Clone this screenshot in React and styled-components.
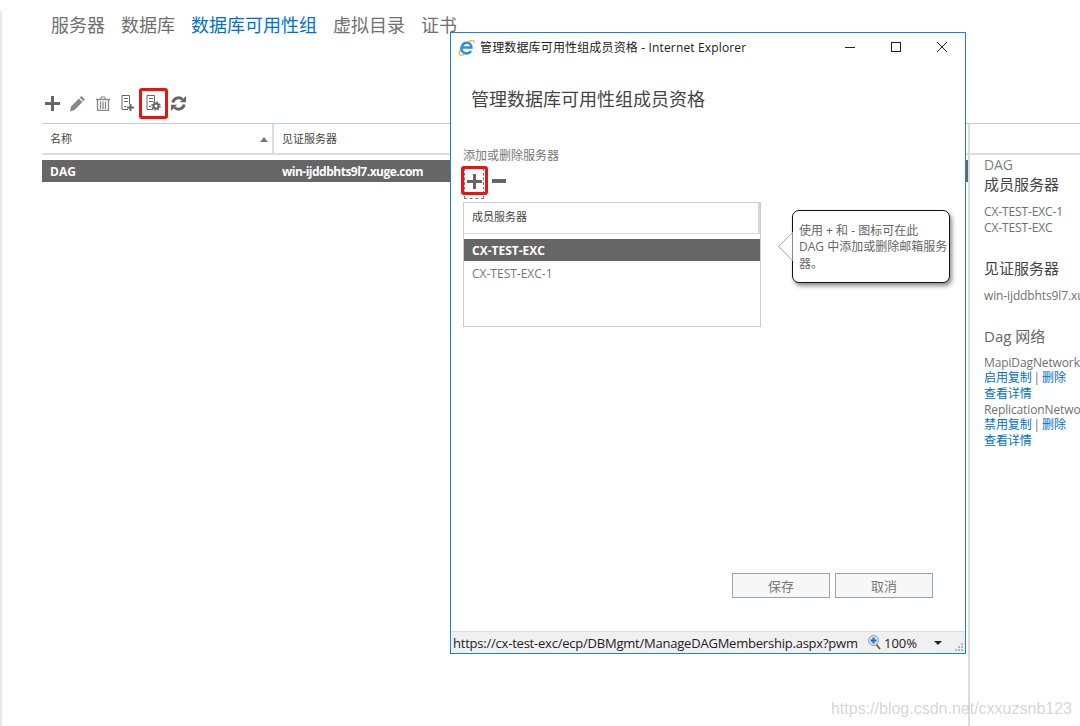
import React from 'react';
import styled, { createGlobalStyle } from 'styled-components';

const grey = '#707070';
const blue = '#0072c6';
const line = '#c8cfd4';

const GlobalStyle = createGlobalStyle`
  html, body {
    margin: 0;
    padding: 0;
    background: #fff;
  }
  body {
    font-family: "Open Sans", "Noto Sans CJK SC", sans-serif;
    font-size: 12px;
    color: ${grey};
  }
  *, *::before, *::after {
    box-sizing: border-box;
  }
`;

const Page = styled.div`
  position: relative;
  display: flex;
  width: 1080px;
  height: 726px;
  overflow: hidden;
`;

const Rail = styled.div`
  width: 2px;
  margin-top: 11px;
  background: #e9e9e9;
`;

const Main = styled.div`
  flex: 1;
  display: flex;
  flex-direction: column;
  min-width: 0;
`;

const Nav = styled.nav`
  display: flex;
  gap: 16px;
  height: 36px;
  padding: 12px 0 0 49px;
  font-size: 18px;
  line-height: 26px;
  white-space: nowrap;
`;

const NavItem = styled.span`
  color: ${(p) => (p.$active ? blue : grey)};
`;

const Toolbar = styled.div`
  display: flex;
  align-items: center;
  height: 40px;
  margin-top: 47px;
  padding-left: 38px;
`;

const ToolButton = styled.span`
  position: relative;
  display: flex;
  align-items: center;
  justify-content: center;
  width: 25.2px;
  height: 20px;
  color: ${(p) => (p.$soft ? '#888' : '#666')};

  ${(p) => p.$marked && `
    &::after {
      content: '';
      position: absolute;
      left: -2px;
      top: -5px;
      width: 29px;
      height: 31px;
      border: 3px solid #f01010;
      border-radius: 3px;
    }
  `}
`;

const Split = styled.div`
  flex: 1;
  display: flex;
  margin-left: 40px;
  border-top: 1px solid ${line};
  min-height: 0;
`;

const ListPane = styled.div`
  width: 926px;
  flex: none;
`;

const HeaderRow = styled.div`
  display: flex;
  height: 31px;
  border-bottom: 2px solid #d9dde0;
  font-size: 11px;
  line-height: 30px;
  color: #444;
`;

const HeaderCell = styled.div`
  position: relative;
  width: ${(p) => p.$width};
  padding-left: 8px;
  border-right: ${(p) => (p.$divider ? '2px solid #d9dde0' : 'none')};
`;

const SortArrow = styled.i`
  position: absolute;
  right: 4px;
  top: 13px;
  border-left: 4px solid transparent;
  border-right: 4px solid transparent;
  border-bottom: 5px solid #777;
`;

const DataRow = styled.div`
  display: flex;
  height: 22px;
  margin-top: 5px;
  background: #666;
  color: #fff;
  font-weight: 700;
  line-height: 23px;
`;

const DataCell = styled.div`
  width: ${(p) => p.$width};
  padding-left: 8px;
  letter-spacing: ${(p) => (p.$tight ? '-0.5px' : '0')};
`;

const DetailPane = styled.aside`
  flex: 1;
  min-width: 0;
  overflow: hidden;
  border-left: 2px solid #dcdcdc;
  white-space: nowrap;
`;

const DetailHead = styled.div`
  height: 31px;
  border-bottom: 2px solid #d9dde0;
`;

const DetailBody = styled.div`
  padding: 1px 0 0 14px;
  line-height: 15.6px;
  letter-spacing: -0.12px;
  word-spacing: -1px;
`;

const DagName = styled.div`
  font-size: 14px;
  line-height: 18px;
  color: #808080;
`;

const DetailTitle = styled.div`
  font-size: 15px;
  line-height: 20px;
  letter-spacing: 0;
  word-spacing: 0;
  color: ${(p) => (p.$soft ? '#666' : '#444')};
  margin-top: ${(p) => p.$top || 0}px;
  margin-bottom: ${(p) => p.$bottom || 10}px;
`;

const LinkText = styled.a`
  color: ${blue};
`;

const Dialog = styled.section`
  position: absolute;
  left: 450px;
  top: 32px;
  width: 516px;
  height: 622px;
  display: flex;
  flex-direction: column;
  background: #fff;
  border: 1px solid #1883d7;
`;

const TitleBar = styled.header`
  display: flex;
  align-items: center;
  height: 29px;
  flex: none;
  padding: 0 0 1px 7px;
  color: #222;
  font-size: 12px;
  letter-spacing: 0.15px;
`;

const TitleText = styled.span`
  flex: 1;
  margin-left: 5px;
  white-space: nowrap;
`;

const WindowButton = styled.span`
  display: flex;
  width: 46px;
  justify-content: center;
  color: #222;
`;

const DialogBody = styled.div`
  position: relative;
  flex: 1;
  display: flex;
  flex-direction: column;
  padding: 0 32px 33px 12px;
`;

const Heading = styled.h1`
  margin: 23px 0 0 8px;
  font-size: 18px;
  font-weight: 400;
  line-height: 28px;
  color: #444;
`;

const FieldLabel = styled.div`
  margin-top: 34px;
  line-height: 18px;
  color: #777;
`;

const IconRow = styled.div`
  display: flex;
  align-items: flex-start;
  gap: 8px;
  height: 31px;
  margin: 3px 0 0 1px;
`;

const FocusBox = styled.span`
  position: relative;
  display: flex;
  justify-content: center;
  width: 20px;
  height: 31px;
  padding-top: 5px;
  border: 1px dashed #777;
  color: #666;

  &::after {
    content: '';
    position: absolute;
    left: -4px;
    top: -3px;
    width: 27px;
    height: 29px;
    border: 3px solid #f01010;
    border-radius: 3px;
  }
`;

const MinusButton = styled.span`
  display: flex;
  margin-top: 11px;
  color: #666;
`;

const MemberBox = styled.div`
  width: 298px;
  height: 125px;
  margin-top: 3px;
  border: 1px solid ${line};
`;

const MemberHead = styled.div`
  height: 31px;
  padding-left: 8px;
  border-right: 2px solid #d4d8db;
  border-bottom: 1px solid #d4d8db;
  font-size: 11px;
  line-height: 28px;
  color: #444;
`;

const MemberRow = styled.div`
  height: 22px;
  padding-left: 8px;
  line-height: 23px;
  background: ${(p) => (p.$selected ? '#666' : 'transparent')};
  color: ${(p) => (p.$selected ? '#fff' : '#777')};
  font-weight: ${(p) => (p.$selected ? 700 : 400)};
  margin-top: ${(p) => (p.$selected ? 5 : 1)}px;
`;

const Callout = styled.div`
  position: absolute;
  left: 341px;
  top: 148px;
  width: 158px;
  height: 73px;
  padding: 12px 0 0 6px;
  background: #fff;
  border: 1px solid #111;
  border-radius: 7px;
  box-shadow: 2px 3px 4px rgba(0, 0, 0, 0.45);
  line-height: 16.4px;
  color: #666;
  white-space: nowrap;

  &::before {
    content: '';
    position: absolute;
    left: -11px;
    top: 25px;
    width: 21px;
    height: 21px;
    background: #fff;
    border-left: 1px solid #aaa;
    border-bottom: 1px solid #aaa;
    transform: rotate(45deg);
    clip-path: polygon(0 0, 0 100%, 100% 100%);
  }
`;

const ButtonRow = styled.div`
  display: flex;
  justify-content: flex-end;
  gap: 5px;
  margin-top: auto;
`;

const ActionButton = styled.button`
  width: 98px;
  height: 25px;
  padding: 0;
  background: #f7f7f7;
  border: 1px solid #9aa5a5;
  font: inherit;
  font-size: 13px;
  color: #777;
`;

const StatusBar = styled.footer`
  position: relative;
  display: flex;
  align-items: center;
  flex: none;
  height: 22px;
  padding-left: 2px;
  background: #f0f0f0;
  border-top: 1px solid #dcdcdc;
  font-size: 13px;
  color: #222;
  white-space: nowrap;
`;

const StatusUrl = styled.span`
  width: 415px;
  overflow: hidden;
  letter-spacing: -0.22px;
`;

const ZoomValue = styled.span`
  margin-left: 3px;
`;

const DropArrow = styled.i`
  margin-left: 17px;
  border-left: 4px solid transparent;
  border-right: 4px solid transparent;
  border-top: 4px solid #222;
`;

const Grip = styled.svg`
  position: absolute;
  right: 1px;
  bottom: 1px;
`;

const Watermark = styled.div`
  position: absolute;
  right: 8px;
  top: 699px;
  font-family: "Liberation Sans", sans-serif;
  font-size: 16px;
  line-height: 20px;
  color: rgba(150, 150, 150, 0.4);
`;

const PlusIcon = ({ size = 15 }) => (
  <svg width={size} height={size} viewBox="0 0 15 15" fill="currentColor">
    <path d="M6 0h3v6h6v3H9v6H6V9H0V6h6z" />
  </svg>
);

const PencilIcon = () => (
  <svg width="17" height="17" viewBox="0 0 17 17" fill="currentColor">
    <path d="M12.400 1l3.600 3.600-1.600 1.600-3.600-3.600zM9.900 3.500l3.600 3.600-8 8L1 16.400l1-4.900z" />
  </svg>
);

const TrashIcon = () => (
  <svg width="14" height="15" viewBox="0 0 14 15" fill="none" stroke="currentColor">
    <path d="M0 3.500h14" strokeWidth="1.400" />
    <path d="M5 3V1h4v2" />
    <path d="M1.500 3.500v11h11v-11M4.500 5.500v7.500M7 5.500v7.500M9.500 5.500v7.500" strokeWidth="1.300" />
  </svg>
);

const ServerShape = () => (
  <g fill="none" stroke="currentColor">
    <path d="M1 .5h7.500V9M1 .5v14h6" />
    <path d="M3 3.500h4M3 6.500h4" />
    <path d="M3 11.500h2" />
  </g>
);

const ServerAddIcon = () => (
  <svg width="15" height="16" viewBox="0 0 15 16">
    <ServerShape />
    <path d="M8.500 9h2v2.500H13v2h-2.500V16h-2v-2.500H6v-2h2.500z" fill="currentColor" />
  </svg>
);

const ServerGearIcon = () => (
  <svg width="15" height="16" viewBox="0 0 15 16">
    <ServerShape />
    <circle cx="10" cy="11" r="2.500" fill="none" stroke="currentColor" strokeWidth="2" />
    <circle cx="10" cy="11" r="4" fill="none" stroke="currentColor" strokeWidth="1.500" strokeDasharray="1.600 1.540" />
  </svg>
);

const RefreshIcon = () => (
  <svg width="15" height="15" viewBox="0 0 15 15" fill="none" stroke="currentColor" strokeWidth="3">
    <path d="M1.800 6.500A5.800 5.800 0 0 1 11.500 3.500" />
    <path d="M13.200 8.500A5.800 5.800 0 0 1 3.500 11.500" />
    <path d="M8.800 6.200H15V0z" fill="currentColor" stroke="none" />
    <path d="M6.200 8.800H0V15z" fill="currentColor" stroke="none" />
  </svg>
);

const IeIcon = () => (
  <svg width="17" height="17" viewBox="0 0 17 17" fill="none">
    <path d="M1.500 15.500C.5 13 4 5 11 2.200c3-1.200 5.500-1.200 5 1.500" stroke="#f0b020" strokeWidth="1.200" />
    <path d="M3.500 8.500h10c0-6-8.500-6.500-10 0-1 5.500 6.500 8 9.500 3.500" stroke="#2b8fe0" strokeWidth="2.400" />
    <path d="M1.500 15.500c1 1.300 3.500.5 5-.5" stroke="#e8a020" strokeWidth="1.200" />
  </svg>
);

const MinimizeIcon = () => (
  <svg width="10" height="10" viewBox="0 0 10 10" stroke="currentColor">
    <path d="M0 5.500h10" />
  </svg>
);

const MaximizeIcon = () => (
  <svg width="10" height="10" viewBox="0 0 10 10" fill="none" stroke="currentColor">
    <rect x=".5" y=".5" width="9" height="9" />
  </svg>
);

const CloseIcon = () => (
  <svg width="10" height="10" viewBox="0 0 10 10" stroke="currentColor">
    <path d="M0 0l10 10M10 0L0 10" />
  </svg>
);

const ZoomIcon = () => (
  <svg width="13" height="15" viewBox="0 0 13 15">
    <path d="M8 9l4 5" stroke="#8a5a2b" strokeWidth="2" />
    <circle cx="5.500" cy="5.500" r="5" fill="#cfe3f5" stroke="#8aa0b5" />
    <path d="M4.500 2.500h2v2h2v2h-2v2h-2v-2h-2v-2h2z" fill="#1c6fc4" />
  </svg>
);

const navItems = ['服务器', '数据库', '数据库可用性组', '虚拟目录', '证书'];

const App = () => (
  <Page>
    <GlobalStyle />
    <Rail />
    <Main>
      <Nav>
        {navItems.map((item) => (
          <NavItem key={item} $active={item === '数据库可用性组'}>{item}</NavItem>
        ))}
      </Nav>
      <Toolbar>
        <ToolButton><PlusIcon /></ToolButton>
        <ToolButton $soft><PencilIcon /></ToolButton>
        <ToolButton $soft><TrashIcon /></ToolButton>
        <ToolButton><ServerAddIcon /></ToolButton>
        <ToolButton $marked><ServerGearIcon /></ToolButton>
        <ToolButton><RefreshIcon /></ToolButton>
      </Toolbar>
      <Split>
        <ListPane>
          <HeaderRow>
            <HeaderCell $width="232px" $divider>名称<SortArrow /></HeaderCell>
            <HeaderCell $width="694px">见证服务器</HeaderCell>
          </HeaderRow>
          <DataRow>
            <DataCell $width="232px">DAG</DataCell>
            <DataCell $width="694px" $tight>win-ijddbhts9l7.xuge.com</DataCell>
          </DataRow>
        </ListPane>
        <DetailPane>
          <DetailHead />
          <DetailBody>
            <DagName>DAG</DagName>
            <DetailTitle>成员服务器</DetailTitle>
            <div>CX-TEST-EXC-1</div>
            <div>CX-TEST-EXC</div>
            <DetailTitle $top={23}>见证服务器</DetailTitle>
            <div>win-ijddbhts9l7.xuge.com</div>
            <DetailTitle $top={22} $bottom={9} $soft>Dag 网络</DetailTitle>
            <div>MapiDagNetwork</div>
            <div><LinkText>启用复制</LinkText> | <LinkText>删除</LinkText></div>
            <div><LinkText>查看详情</LinkText></div>
            <div>ReplicationNetwork</div>
            <div><LinkText>禁用复制</LinkText> | <LinkText>删除</LinkText></div>
            <div><LinkText>查看详情</LinkText></div>
          </DetailBody>
        </DetailPane>
      </Split>
    </Main>

    <Dialog>
      <TitleBar>
        <IeIcon />
        <TitleText>管理数据库可用性组成员资格 - Internet Explorer</TitleText>
        <WindowButton><MinimizeIcon /></WindowButton>
        <WindowButton><MaximizeIcon /></WindowButton>
        <WindowButton><CloseIcon /></WindowButton>
      </TitleBar>
      <DialogBody>
        <Heading>管理数据库可用性组成员资格</Heading>
        <FieldLabel>添加或删除服务器</FieldLabel>
        <IconRow>
          <FocusBox><PlusIcon /></FocusBox>
          <MinusButton>
            <svg width="14" height="4" viewBox="0 0 14 4" fill="currentColor"><rect width="14" height="4" /></svg>
          </MinusButton>
        </IconRow>
        <MemberBox>
          <MemberHead>成员服务器</MemberHead>
          <MemberRow $selected>CX-TEST-EXC</MemberRow>
          <MemberRow>CX-TEST-EXC-1</MemberRow>
        </MemberBox>
        <Callout>
          使用 + 和 - 图标可在此<br />
          DAG 中添加或删除邮箱服务<br />
          器。
        </Callout>
        <ButtonRow>
          <ActionButton>保存</ActionButton>
          <ActionButton>取消</ActionButton>
        </ButtonRow>
      </DialogBody>
      <StatusBar>
        <StatusUrl>https://cx-test-exc/ecp/DBMgmt/ManageDAGMembership.aspx?pwm</StatusUrl>
        <ZoomIcon />
        <ZoomValue>100%</ZoomValue>
        <DropArrow />
        <Grip width="9" height="9" viewBox="0 0 9 9" fill="#b5b5b5">
          <rect x="6" y="0" width="2" height="2" />
          <rect x="3" y="3" width="2" height="2" />
          <rect x="6" y="3" width="2" height="2" />
          <rect x="0" y="6" width="2" height="2" />
          <rect x="3" y="6" width="2" height="2" />
          <rect x="6" y="6" width="2" height="2" />
        </Grip>
      </StatusBar>
    </Dialog>

    <Watermark>https://blog.csdn.net/cxxuzsnb123</Watermark>
  </Page>
);

export default App;
